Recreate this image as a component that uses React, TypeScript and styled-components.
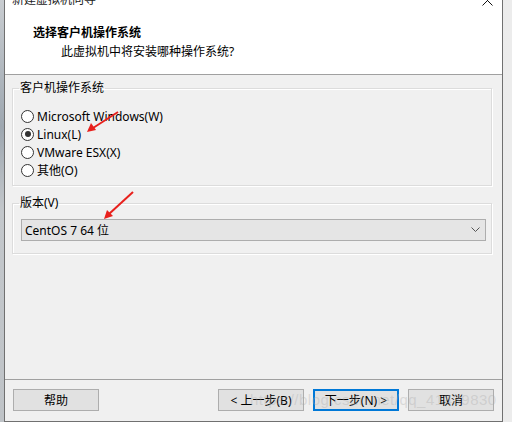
import React from "react";
import styled, { createGlobalStyle } from "styled-components";

const Global = createGlobalStyle`
  html, body { margin: 0; padding: 0; }
  body {
    font-family: "Noto Sans", "Noto Sans CJK SC", sans-serif;
    font-size: 12px;
    color: #000;
    background: #e6e6e6;
  }
`;

const Page = styled.div`
  position: relative;
  width: 512px;
  height: 422px;
  overflow: hidden;
  display: flex;
  background: linear-gradient(90deg, #dcdcdc 0%, #ececec 100%);
`;

const LeftStrip = styled.div`
  width: 4px;
  flex: none;
  background: linear-gradient(180deg, #c9cdd1 0%, #9ea7b0 30%, #c3c7cb 50%, #bfc3c7 100%);
`;

const Window = styled.div`
  width: 497px;
  flex: none;
  margin-top: -6px;
  height: 427px;
  display: flex;
  flex-direction: column;
  border-left: 1px solid #707070;
  border-right: 1px solid #707070;
  border-bottom: 1px solid #707070;
  background: #f0f0f0;
`;

const TitleBar = styled.div`
  height: 12px;
  flex: none;
  background: #fff;
  display: flex;
  align-items: center;
  justify-content: space-between;
  padding: 0 9px 0 7px;
`;

const TitleText = styled.span`
  font-size: 12px;
  line-height: 12px;
  color: #222;
`;

const Header = styled.div`
  height: 68px;
  flex: none;
  background: #fff;
  display: flex;
  flex-direction: column;
  padding: 20px 0 0 28px;
  box-sizing: border-box;
`;

const HeaderTitle = styled.div`
  font-weight: bold;
  font-size: 12px;
  line-height: 14px;
`;

const HeaderSub = styled.div`
  font-size: 12px;
  line-height: 14px;
  margin: 5px 0 0 28px;
`;

const Separator = styled.div`
  height: 1px;
  flex: none;
  background: #a0a0a0;
`;

const Body = styled.div`
  height: 304px;
  flex: none;
  padding: 6px 10px 0 7px;
  box-sizing: border-box;
  display: flex;
  flex-direction: column;
  gap: 10px;
`;

const Group = styled.fieldset<{ $pt: number; $pb: number; $pl: number; $pr: number }>`
  margin: 0;
  border: 1px solid #dcdcdc;
  box-shadow: inset 1px 1px 0 #fff, 1px 1px 0 #fff;
  padding: ${(p) => `${p.$pt}px ${p.$pr}px ${p.$pb}px ${p.$pl}px`};
  min-width: 0;
`;

const Legend = styled.legend`
  padding: 0 1px;
  margin-left: -2px;
  font-size: 12px;
  line-height: 14px;
`;

const RadioRow = styled.label`
  display: flex;
  align-items: center;
  height: 18px;
  gap: 3px;
`;

const RadioCircle = styled.span<{ $checked?: boolean }>`
  width: 11px;
  height: 11px;
  border-radius: 50%;
  border: 1px solid #333;
  background: #fff;
  display: flex;
  align-items: center;
  justify-content: center;
  flex: none;
  &::after {
    content: "";
    width: 6px;
    height: 6px;
    border-radius: 50%;
    background: #333;
    display: ${(p) => (p.$checked ? "block" : "none")};
  }
`;

const Select = styled.div`
  height: 22px;
  box-sizing: border-box;
  border: 1px solid #adadad;
  background: #e5e5e5;
  display: flex;
  align-items: center;
  justify-content: space-between;
  padding: 0 5px 0 3px;
  font-size: 12px;
`;

const Footer = styled.div`
  height: 40px;
  flex: none;
  display: flex;
  align-items: flex-start;
  padding: 9px 8px 0 8px;
  box-sizing: border-box;
  gap: 9px;
`;

const Spacer = styled.div`
  flex: 1;
`;

const Button = styled.button<{ $default?: boolean }>`
  width: 86px;
  height: 22px;
  box-sizing: border-box;
  border: ${(p) => (p.$default ? "2px solid #0078d7" : "1px solid #adadad")};
  background: #e1e1e1;
  font-family: "Noto Sans", "Noto Sans CJK SC", sans-serif;
  font-size: 12px;
  color: #000;
  padding: 0;
  display: flex;
  align-items: center;
  justify-content: center;
`;

const Overlay = styled.svg`
  position: absolute;
  left: 0;
  top: 0;
  pointer-events: none;
`;

const Watermark = styled.span`
  position: absolute;
  left: 250px;
  top: 391px;
  font-family: "Liberation Sans", sans-serif;
  font-size: 15px;
  color: rgba(170, 170, 170, 0.35);
  letter-spacing: 0.5px;
  pointer-events: none;
  white-space: nowrap;
`;

const radios = [
  { label: "Microsoft Windows(W)", checked: false },
  { label: "Linux(L)", checked: true },
  { label: "VMware ESX(X)", checked: false },
  { label: "其他(O)", checked: false },
];

export default function App() {
  return (
    <>
      <Global />
      <Page>
        <LeftStrip />
        <Window>
          <TitleBar>
            <TitleText>新建虚拟机向导</TitleText>
            <svg width="11" height="11" viewBox="0 0 11 11">
              <path d="M0.5 0.5 L10.5 10.5 M10.5 0.5 L0.5 10.5" stroke="#111" strokeWidth="1" />
            </svg>
          </TitleBar>
          <Header>
            <HeaderTitle>选择客户机操作系统</HeaderTitle>
            <HeaderSub>此虚拟机中将安装哪种操作系统?</HeaderSub>
          </Header>
          <Separator />
          <Body>
            <Group $pt={12} $pb={6} $pl={8} $pr={8}>
              <Legend>客户机操作系统</Legend>
              {radios.map((r) => (
                <RadioRow key={r.label}>
                  <RadioCircle $checked={r.checked} />
                  {r.label}
                </RadioRow>
              ))}
            </Group>
            <Group $pt={9} $pb={12} $pl={8} $pr={5}>
              <Legend>版本(V)</Legend>
              <Select>
                <span>CentOS 7 64 位</span>
                <svg width="9" height="6" viewBox="0 0 9 6">
                  <path d="M0.5 0.5 L4.5 4.5 L8.5 0.5" stroke="#555" strokeWidth="1" fill="none" />
                </svg>
              </Select>
            </Group>
          </Body>
          <Separator />
          <Footer>
            <Button>帮助</Button>
            <Spacer />
            <Button>&lt; 上一步(B)</Button>
            <Button $default>下一步(N) &gt;</Button>
            <Button>取消</Button>
          </Footer>
        </Window>
        <Watermark>https://blog.csdn.net/qq_41439830</Watermark>
        <Overlay width="512" height="422" viewBox="0 0 512 422">
          <path d="M118 112 L93 128" stroke="#e8201c" strokeWidth="2" />
          <path d="M87 132 L91 123 L96 130 Z" fill="#e8201c" />
          <path d="M133 192 L109 214" stroke="#e8201c" strokeWidth="2" />
          <path d="M104 219 L107 210 L113 216 Z" fill="#e8201c" />
        </Overlay>
      </Page>
    </>
  );
}
